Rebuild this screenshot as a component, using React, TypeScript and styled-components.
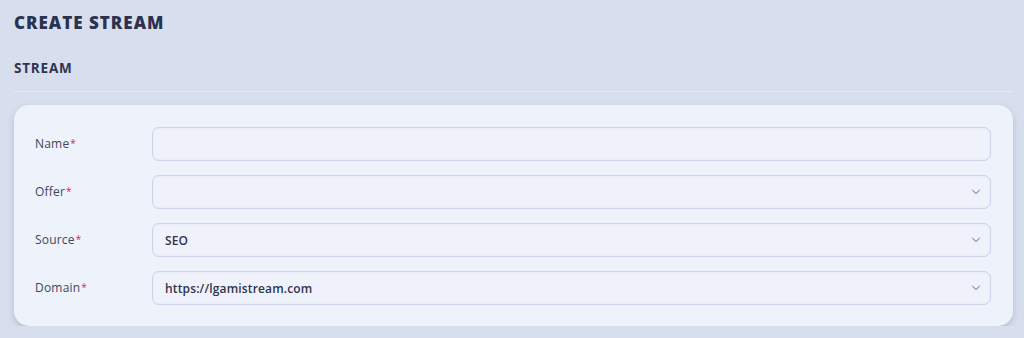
import React from "react";
import styled, { createGlobalStyle } from "styled-components";

const Global = createGlobalStyle`
  html, body { margin: 0; padding: 0; }
  body {
    background: #d7dfee;
    font-family: "Open Sans", "Noto Sans", sans-serif;
    color: #2d334d;
  }
`;

const Page = styled.div`
  padding: 13px 11px 0 14px;
  display: flex;
  flex-direction: column;
`;

const Title = styled.h1`
  margin: 0;
  font-size: 17px;
  font-weight: 800;
  letter-spacing: 1px;
  line-height: 20px;
  color: #2b3250;
`;

const Section = styled.h2`
  margin: 27px 0 0;
  font-size: 13.5px;
  font-weight: 700;
  letter-spacing: 0.8px;
  line-height: 16px;
  color: #2e3450;
  padding-bottom: 15px;
  border-bottom: 1px solid #e4e9f4;
`;

const Card = styled.div`
  margin-top: 13px;
  background: #eef2fa;
  border-radius: 15px;
  padding: 22px 22px 21px 21px;
  box-shadow: 0 3px 6px rgba(150, 160, 195, 0.55);
  display: flex;
  flex-direction: column;
  gap: 14px;
`;

const Row = styled.div`
  display: grid;
  grid-template-columns: 117px 1fr;
  align-items: center;
`;

const Label = styled.label`
  font-size: 12px;
  color: #3f4560;
  letter-spacing: 0.2px;
  padding-bottom: 2px;
`;

const Req = styled.span`
  color: #d6285e;
  font-size: 10px;
  vertical-align: 1px;
  margin-left: 1px;
`;

const Field = styled.div`
  height: 34px;
  box-sizing: border-box;
  border: 1px solid #cdd3e8;
  border-radius: 7px;
  background: #eff2fb;
  display: flex;
  align-items: center;
  padding: 0 12px 0 12px;
  font-size: 12px;
  font-weight: 600;
  letter-spacing: 0.15px;
  color: #2f344d;
  box-shadow: inset 0 0 1px rgba(180, 188, 215, 0.5);
`;

const Value = styled.span`
  flex: 1;
`;

const ChevronBox = styled.span`
  display: flex;
  margin-right: -3px;
`;

const Chevron = () => (
  <ChevronBox>
    <svg width="10" height="6" viewBox="0 0 10 6" fill="none">
      <path d="M1.5 1.2 L5 4.5 L8.5 1.2" stroke="#9ba1ba" strokeWidth="1.2" strokeLinecap="round" strokeLinejoin="round" />
    </svg>
  </ChevronBox>
);

const fields = [
  { label: "Name", value: "", select: false },
  { label: "Offer", value: "", select: true },
  { label: "Source", value: "SEO", select: true },
  { label: "Domain", value: "https://lgamistream.com", select: true },
];

export default function App() {
  return (
    <>
      <Global />
      <Page>
        <Title>CREATE STREAM</Title>
        <Section>STREAM</Section>
        <Card>
          {fields.map((f) => (
            <Row key={f.label}>
              <Label>
                {f.label}
                <Req>*</Req>
              </Label>
              <Field>
                <Value>{f.value}</Value>
                {f.select && <Chevron />}
              </Field>
            </Row>
          ))}
        </Card>
      </Page>
    </>
  );
}
